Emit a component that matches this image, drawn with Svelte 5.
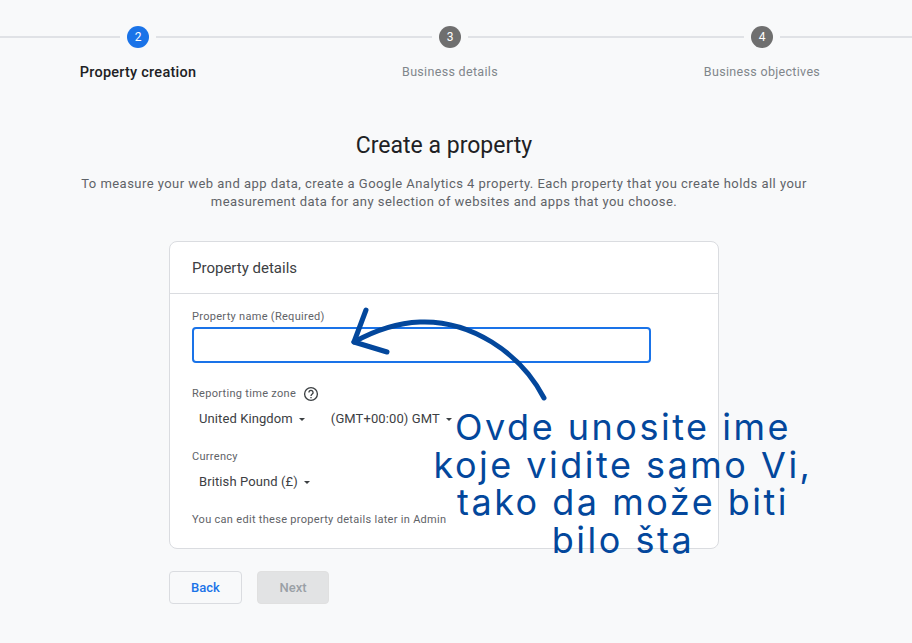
<script lang="ts">
const steps = [
  { num: 2, label: 'Property creation', active: true },
  { num: 3, label: 'Business details', active: false },
  { num: 4, label: 'Business objectives', active: false },
];
</script>

<div class="page">
  <div class="stepper">
    {#each steps as step}
      <div class="step" class:active={step.active}>
        <div class="track">
          <span class="line"></span>
          <span class="num">{step.num}</span>
          <span class="line"></span>
        </div>
        <div class="step-label">{step.label}</div>
      </div>
    {/each}
  </div>

  <main class="content">
    <h1>Create a property</h1>
    <p class="intro">To measure your web and app data, create a Google Analytics 4 property. Each property that you create holds all your measurement data for any selection of websites and apps that you choose.</p>

    <section class="card">
      <div class="card-head">Property details</div>
      <div class="card-body">
        <label class="field-label" for="pname">Property name (Required)</label>
        <input id="pname" class="name-input" type="text" />

        <div class="field-label tz-label">
          Reporting time zone
          <svg class="help" width="16" height="16" viewBox="0 0 24 24" fill="none" stroke="#3c4043" stroke-width="2">
            <circle cx="12" cy="12" r="9.6" />
            <path d="M8.9 9.6a3.1 3.1 0 1 1 4.9 2.5c-1.1.8-1.8 1.4-1.8 2.9" />
            <path d="M12 16.4v2" />
          </svg>
        </div>
        <div class="selects">
          <div class="select">United Kingdom <span class="caret"></span></div>
          <div class="select gmt">(GMT+00:00) GMT <span class="caret"></span></div>
        </div>

        <div class="field-label cur-label">Currency</div>
        <div class="selects cur-select">
          <div class="select">British Pound (£) <span class="caret"></span></div>
        </div>

        <div class="note">You can edit these property details later in Admin</div>
      </div>
    </section>

    <div class="actions">
      <button class="btn back">Back</button>
      <button class="btn next" disabled>Next</button>
    </div>
  </main>

  <svg class="arrow" width="912" height="643" viewBox="0 0 912 643" fill="none" stroke="#03479c" stroke-width="5" stroke-linecap="round" stroke-linejoin="round">
    <path d="M544 398C520 352 470 320 420 322C396 323 372 332 354 342" />
    <path d="M366 310L354 342L387 352" />
  </svg>

  <div class="callout">Ovde unosite ime<br />koje vidite samo Vi,<br />tako da može biti<br />bilo šta</div>
</div>

<style>
:global(body) {
  margin: 0;
  background: #f8f9fa;
}

.page {
  position: relative;
  width: 912px;
  height: 643px;
  overflow: hidden;
  font-family: Roboto, "Liberation Sans", sans-serif;
  color: #3c4043;
}

.stepper {
  display: grid;
  grid-template-columns: repeat(3, 312px);
  margin-left: -18px;
  padding-top: 26px;
}

.step {
  display: flex;
  flex-direction: column;
  align-items: center;
}

.track {
  display: flex;
  align-items: center;
  width: 100%;
  gap: 7px;
}

.line {
  flex: 1;
  height: 2px;
  background: #e0e2e6;
}

.num {
  width: 22px;
  height: 22px;
  border-radius: 50%;
  background: #6f6f6f;
  color: #fff;
  font-size: 12px;
  display: grid;
  place-items: center;
}

.step.active .num {
  background: #1a73e8;
}

.step-label {
  margin-top: 16px;
  font-size: 12.5px;
  line-height: 16px;
  letter-spacing: 0.32px;
  color: #80868b;
}

.step.active .step-label {
  margin-top: 17px;
  color: #202124;
  font-size: 14.5px;
  font-weight: 500;
  letter-spacing: 0.25px;
}

.content {
  width: 550px;
  margin-left: 169px;
  display: flex;
  flex-direction: column;
}

h1 {
  margin: 50px -100px 0;
  font-size: 23px;
  line-height: 30px;
  font-weight: 400;
  text-align: center;
  color: #202124;
}

.intro {
  margin: 14px -100px 0;
  font-size: 13px;
  line-height: 18px;
  letter-spacing: 0.46px;
  text-align: center;
  color: #5f6368;
}

.card {
  margin-top: 30px;
  height: 308px;
  box-sizing: border-box;
  background: #fff;
  border: 1px solid #dadce0;
  border-radius: 8px;
}

.card-head {
  height: 52px;
  box-sizing: border-box;
  padding: 16px 22px 0;
  font-size: 15px;
  line-height: 20px;
  color: #3c4043;
  border-bottom: 1px solid #dadce0;
}

.card-body {
  padding: 16px 22px 0;
  display: flex;
  flex-direction: column;
}

.field-label {
  font-size: 11px;
  line-height: 14px;
  letter-spacing: 0.3px;
  color: #5f6368;
}

.name-input {
  margin-top: 3px;
  width: 459px;
  height: 36px;
  box-sizing: border-box;
  border: 2px solid #1a73e8;
  border-radius: 4px;
  background: #fff;
  outline: none;
}

.tz-label {
  margin-top: 23px;
  display: flex;
  align-items: center;
  gap: 7px;
  height: 16px;
}

.selects {
  display: flex;
  margin-top: 8px;
  padding-left: 7px;
}

.cur-select {
  margin-top: 9px;
}

.select {
  display: flex;
  align-items: center;
  gap: 6px;
  font-size: 13px;
  line-height: 18px;
  letter-spacing: 0.1px;
  color: #3c4043;
}

.gmt {
  margin-left: 26px;
}

.caret {
  width: 0;
  height: 0;
  margin-top: 1px;
  border-left: 3.5px solid transparent;
  border-right: 3.5px solid transparent;
  border-top: 3.5px solid #3c4043;
}

.cur-label {
  margin-top: 22px;
}

.note {
  margin-top: 22px;
  font-size: 11px;
  line-height: 14px;
  letter-spacing: 0.3px;
  color: #5f6368;
}

.actions {
  display: flex;
  gap: 15px;
  margin-top: 22px;
}

.btn {
  height: 33px;
  box-sizing: border-box;
  border-radius: 4px;
  font-family: inherit;
  font-size: 13px;
  font-weight: 500;
}

.back {
  width: 73px;
  background: #f8f9fa;
  border: 1px solid #dadce0;
  color: #1a73e8;
}

.next {
  width: 72px;
  background: #e2e3e4;
  border: 1px solid #e0e0e0;
  color: #9aa0a6;
}

.arrow {
  position: absolute;
  inset: 0;
  pointer-events: none;
}

.callout {
  position: absolute;
  left: 373px;
  top: 409px;
  width: 500px;
  text-align: center;
  font-family: Inter, sans-serif;
  font-size: 36px;
  line-height: 37.5px;
  letter-spacing: 2.5px;
  color: #03479c;
}
</style>
